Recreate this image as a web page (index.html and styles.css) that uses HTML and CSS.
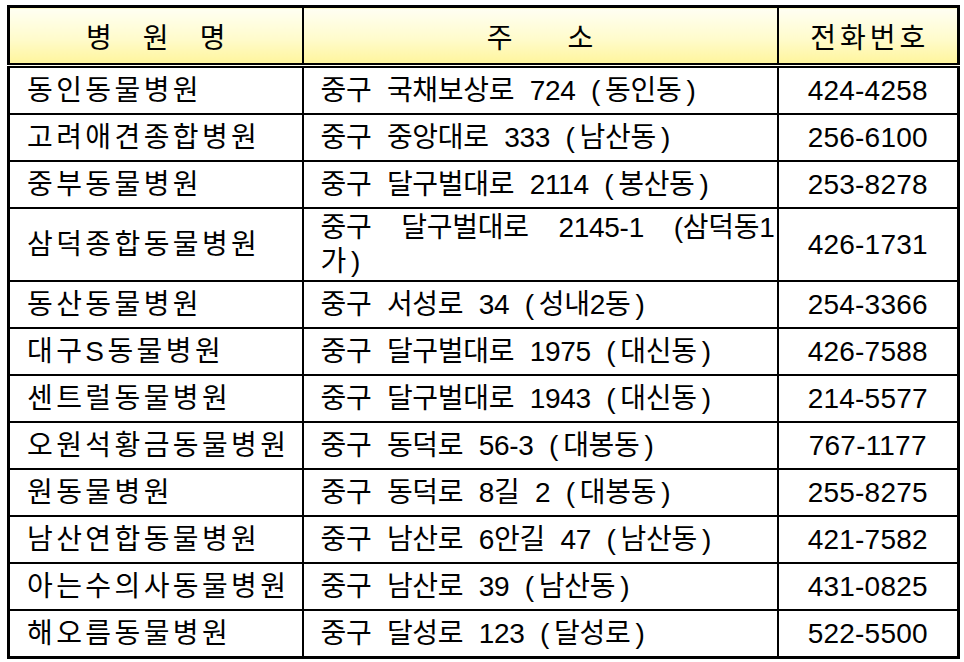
FILE: index.html
```html
<!DOCTYPE html>
<html lang="ko">
<head>
<meta charset="utf-8">
<title>동물병원 목록</title>
<link rel="stylesheet" href="styles.css">
</head>
<body>
<table class="hospitals">
  <colgroup>
    <col class="c-name">
    <col class="c-addr">
    <col class="c-tel">
  </colgroup>
  <thead>
    <tr>
      <th><span class="spread spread-name"><span>병</span><span>원</span><span>명</span></span></th>
      <th><span class="spread spread-addr"><span>주</span><span>소</span></span></th>
      <th><span class="spread spread-tel"><span>전</span><span>화</span><span>번</span><span>호</span></span></th>
    </tr>
  </thead>
  <tbody>
    <tr><td class="name">동인동물병원</td><td class="addr">중구 국채보상로 724 <span class="pl">(</span>동인동<span class="pr">)</span></td><td class="tel">424-4258</td></tr>
    <tr><td class="name">고려애견종합병원</td><td class="addr">중구 중앙대로 333 <span class="pl">(</span>남산동<span class="pr">)</span></td><td class="tel">256-6100</td></tr>
    <tr><td class="name">중부동물병원</td><td class="addr">중구 달구벌대로 2114 <span class="pl">(</span>봉산동<span class="pr">)</span></td><td class="tel">253-8278</td></tr>
    <tr class="tall"><td class="name">삼덕종합동물병원</td><td class="addr"><span class="line-just">중구 달구벌대로 2145-1 (삼덕동1</span><span class="line-last">가<span class="pr">)</span></span></td><td class="tel">426-1731</td></tr>
    <tr><td class="name">동산동물병원</td><td class="addr">중구 서성로 34 <span class="pl">(</span>성내2동<span class="pr">)</span></td><td class="tel">254-3366</td></tr>
    <tr><td class="name">대구S동물병원</td><td class="addr">중구 달구벌대로 1975 <span class="pl">(</span>대신동<span class="pr">)</span></td><td class="tel">426-7588</td></tr>
    <tr><td class="name">센트럴동물병원</td><td class="addr">중구 달구벌대로 1943 <span class="pl">(</span>대신동<span class="pr">)</span></td><td class="tel">214-5577</td></tr>
    <tr><td class="name">오원석황금동물병원</td><td class="addr">중구 동덕로 56-3 <span class="pl">(</span>대봉동<span class="pr">)</span></td><td class="tel">767-1177</td></tr>
    <tr><td class="name">원동물병원</td><td class="addr">중구 동덕로 8길 2 <span class="pl">(</span>대봉동<span class="pr">)</span></td><td class="tel">255-8275</td></tr>
    <tr><td class="name">남산연합동물병원</td><td class="addr">중구 남산로 6안길 47 <span class="pl">(</span>남산동<span class="pr">)</span></td><td class="tel">421-7582</td></tr>
    <tr><td class="name">아는수의사동물병원</td><td class="addr">중구 남산로 39 <span class="pl">(</span>남산동<span class="pr">)</span></td><td class="tel">431-0825</td></tr>
    <tr><td class="name">해오름동물병원</td><td class="addr">중구 달성로 123 <span class="pl">(</span>달성로<span class="pr">)</span></td><td class="tel">522-5500</td></tr>
  </tbody>
</table>
</body>
</html>
```

FILE: styles.css
```css
html, body {
  margin: 0;
  padding: 0;
  background: #fff;
}

body {
  font-family: "Liberation Sans", "Noto Sans CJK KR", sans-serif;
  color: #000;
}

.hospitals {
  margin: 5px 0 0 7px;
  width: 950px;
  border-collapse: collapse;
  table-layout: fixed;
  border: 3px solid #000;
  font-size: 28px;
}

.c-name { width: 294px; }
.c-addr { width: 475px; }
.c-tel { width: 181px; }

.hospitals th {
  height: 55px;
  padding: 0;
  font-size: 28px;
  font-weight: normal;
  background: linear-gradient(to bottom, #fffff3 0%, #fffbcc 55%, #fff59c 100%);
  border: 2px solid #000;
  border-bottom: 5px double #000;
  text-align: center;
  vertical-align: middle;
}

.spread {
  display: inline-flex;
  justify-content: center;
}

.spread-name { gap: 31px; }
.spread-addr { gap: 55px; }
.spread-tel { gap: 4px; }

.hospitals td {
  height: 45px;
  padding: 0 0 0 17px;
  border: 2px solid #000;
  vertical-align: middle;
  white-space: nowrap;
  line-height: 34px;
}

.hospitals .tall td {
  height: 71px;
}

.hospitals td.name {
  letter-spacing: 3.4px;
}

.hospitals td.addr {
  padding-right: 2px;
  letter-spacing: -0.3px;
  word-spacing: 8px;
}

.pl {
  margin-right: 5px;
}

.pr {
  margin-left: 5px;
}

.line-just {
  display: block;
  text-align: justify;
  text-align-last: justify;
  word-spacing: 0;
}

.line-last {
  display: block;
}

.hospitals td.tel {
  padding: 0;
  text-align: center;
  letter-spacing: 0.2px;
}
```
